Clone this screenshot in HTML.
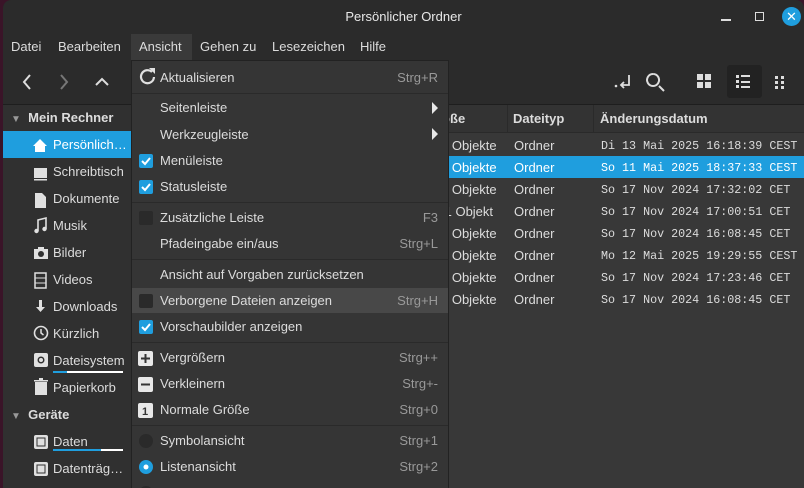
<!DOCTYPE html>
<html><head><meta charset="utf-8"><style>
*{margin:0;padding:0;box-sizing:border-box}
body{width:804px;height:488px;overflow:hidden;background:#3a1428;font-family:"Liberation Sans","DejaVu Sans",sans-serif;font-size:13px;color:#dcdcdc;position:relative}
.win{position:absolute;left:3px;top:0;width:801px;height:488px;background:#2b2b2b;border-radius:8px 8px 0 0;overflow:hidden}
.abs{position:absolute}
.t{position:absolute;white-space:nowrap;line-height:16px}
.col div{white-space:nowrap;height:22px}
</style></head><body>
<div class="win">
 <div class="t" style="left:0;width:801px;text-align:center;top:9px;color:#e8e8e8">Persönlicher Ordner</div>
 <div class="abs" style="left:718px;top:19px;width:10px;height:1.5px;background:#ddd"></div>
 <div class="abs" style="left:752px;top:12px;width:9px;height:9px;border:1.5px solid #ddd"></div>
 <div class="abs" style="left:779px;top:7px;width:19px;height:19px;border-radius:50%;background:#1f9ede;color:#fff;font-weight:bold;text-align:center;line-height:19px;font-size:13px">✕</div>
 <div class="abs" style="left:128px;top:34px;width:61px;height:26px;background:#3a3a3a"></div>
 <div class="t" style="left:8px;top:39px">Datei</div>
 <div class="t" style="left:55px;top:39px">Bearbeiten</div>
 <div class="t" style="left:136px;top:39px">Ansicht</div>
 <div class="t" style="left:197px;top:39px">Gehen zu</div>
 <div class="t" style="left:269px;top:39px">Lesezeichen</div>
 <div class="t" style="left:357px;top:39px">Hilfe</div>
 <svg class="abs" style="left:0;top:60px" width="801" height="45">
  <g fill="none" stroke="#ddd" stroke-width="2">
   <path d="M27 15l-6 7 6 7"/><path d="M58 15l6 7-6 7" stroke="#777"/><path d="M93 25l6-6 6 6"/>
   <path d="M650 14a6 6 0 1 0 .1 0M656 26l5 5"/>
   <path d="M626 15v10h-7M621 22l-3 3 3 3" stroke-width="1.8"/>
  </g>
  <circle cx="613" cy="26" r="1.3" fill="#ddd"/>
  <g fill="#ddd"><rect x="694" y="14" width="6" height="6"/><rect x="702" y="14" width="6" height="6"/><rect x="694" y="22" width="6" height="6"/><rect x="702" y="22" width="6" height="6"/></g>
  <rect x="724" y="5" width="35" height="33" rx="3" fill="#222"/>
  <g fill="#ddd"><rect x="733" y="15" width="3" height="3"/><rect x="738" y="15" width="9" height="2"/><rect x="733" y="20" width="3" height="3"/><rect x="738" y="21" width="9" height="2"/><rect x="733" y="25" width="3" height="3"/><rect x="738" y="26" width="9" height="2"/>
  <rect x="772" y="16" width="3" height="3"/><rect x="778" y="16" width="3" height="3"/><rect x="772" y="21" width="3" height="3"/><rect x="778" y="21" width="3" height="3"/><rect x="772" y="26" width="3" height="3"/><rect x="778" y="26" width="3" height="3"/></g>
 </svg>
 <div class="abs" style="left:0;top:104px;width:801px;height:1px;background:#1e1e1e"></div>
 <div class="abs" style="left:0;top:105px;width:128px;height:383px;background:#303030"></div>
 <div class="abs" style="left:0;top:131px;width:128px;height:27px;background:#1f9ede"></div>
 <div class="t" style="left:8px;top:110px;font-weight:bold;color:#ddd"><span style="color:#999;font-size:10px">▼</span>&nbsp; Mein Rechner</div>
 <div class="t" style="left:50px;top:137px;color:#fff">Persönlich…</div>
 <div class="t" style="left:50px;top:164px">Schreibtisch</div>
 <div class="t" style="left:50px;top:191px">Dokumente</div>
 <div class="t" style="left:50px;top:218px">Musik</div>
 <div class="t" style="left:50px;top:245px">Bilder</div>
 <div class="t" style="left:50px;top:272px">Videos</div>
 <div class="t" style="left:50px;top:299px">Downloads</div>
 <div class="t" style="left:50px;top:326px">Kürzlich</div>
 <div class="t" style="left:50px;top:353px">Dateisystem</div>
 <div class="abs" style="left:50px;top:371px;width:70px;height:2px;background:#fff"></div><div class="abs" style="left:50px;top:371px;width:14px;height:2px;background:#1f9ede"></div>
 <div class="t" style="left:50px;top:380px">Papierkorb</div>
 <div class="t" style="left:8px;top:407px;font-weight:bold"><span style="color:#999;font-size:10px">▼</span>&nbsp; Geräte</div>
 <div class="t" style="left:50px;top:434px">Daten</div>
 <div class="abs" style="left:50px;top:449px;width:70px;height:2px;background:#fff"></div><div class="abs" style="left:50px;top:449px;width:48px;height:2px;background:#1f9ede"></div>
 <div class="t" style="left:50px;top:461px">Datenträg…</div>
 <svg class="abs" style="left:28px;top:134px" width="20" height="350" fill="#e0e0e0">
  <path d="M9 5l-7 7h2v6h10v-6h2z" fill="#fff"/>
  <rect x="3" y="34" width="13" height="10"/><rect x="3" y="45" width="13" height="1.5"/>
  <path d="M4 59h7l4 4v11h-11z"/>
  <path d="M7 97v-11l8-2v11" stroke="#e0e0e0" stroke-width="1.6" fill="none"/><circle cx="5.5" cy="97" r="2.2"/><circle cx="13.5" cy="95" r="2.2"/>
  <path d="M3 115h14v10h-14zM7 113h6v2h-6z"/><circle cx="10" cy="120" r="3" fill="#303030"/>
  <path d="M4 139h11v15h-11z" fill="none" stroke="#e0e0e0" stroke-width="1.5"/><path d="M4 144h11M4 149h11" stroke="#e0e0e0"/>
  <path d="M8 166h3v7h3l-4.5 5-4.5-5h3z"/>
  <circle cx="10" cy="199" r="6.5" fill="none" stroke="#e0e0e0" stroke-width="1.6"/><path d="M10 195v4l2.5 2" stroke="#e0e0e0" stroke-width="1.5" fill="none"/>
  <rect x="3" y="219" width="14" height="14" rx="2"/><circle cx="10" cy="226" r="3.5" fill="#303030"/><circle cx="10" cy="226" r="2"/>
  <path d="M4 248h12v13h-12zM3 246h14v1.5h-14zM8 244h4v2h-4z"/>
  <rect x="3" y="301" width="14" height="14" rx="2"/><rect x="5.5" y="303.5" width="9" height="9" fill="#303030"/><rect x="6.5" y="304.5" width="7" height="7"/>
  <rect x="3" y="328" width="14" height="14" rx="2"/><rect x="5.5" y="330.5" width="9" height="9" fill="#303030"/><rect x="6.5" y="331.5" width="7" height="7"/>
 </svg>
 <div class="abs" style="left:128px;top:105px;width:673px;height:383px;background:#383838"></div>
 <div class="abs" style="left:128px;top:105px;width:673px;height:28px;background:#333;border-bottom:1px solid #2a2a2a"></div>
 <div class="abs" style="left:504px;top:105px;width:1px;height:28px;background:#2a2a2a"></div>
 <div class="abs" style="left:590px;top:105px;width:1px;height:28px;background:#2a2a2a"></div>
 <div class="t" style="left:434px;top:111px;font-weight:bold">röße</div>
 <div class="t" style="left:510px;top:111px;font-weight:bold">Dateityp</div>
 <div class="t" style="left:597px;top:111px;font-weight:bold">Änderungsdatum</div>
 <div class="abs" style="left:128px;top:156px;width:673px;height:22px;background:#1f9ede"></div>
 <div class="col" style="position:absolute;left:438px;top:135px;line-height:22px">
  <div>0 Objekte</div><div style="color:#fff">7 Objekte</div><div>0 Objekte</div><div>&nbsp;1 Objekt</div><div>0 Objekte</div><div>0 Objekte</div><div>3 Objekte</div><div>0 Objekte</div>
 </div>
 <div class="col" style="position:absolute;left:511px;top:135px;line-height:22px">
  <div>Ordner</div><div style="color:#fff">Ordner</div><div>Ordner</div><div>Ordner</div><div>Ordner</div><div>Ordner</div><div>Ordner</div><div>Ordner</div>
 </div>
 <div class="col" style="position:absolute;left:598px;top:135px;line-height:22px;font-family:'Liberation Mono',monospace;font-size:11.7px">
  <div>Di 13 Mai 2025 16:18:39 CEST</div><div style="color:#fff">So 11 Mai 2025 18:37:33 CEST</div><div>So 17 Nov 2024 17:32:02 CET</div><div>So 17 Nov 2024 17:00:51 CET</div><div>So 17 Nov 2024 16:08:45 CET</div><div>Mo 12 Mai 2025 19:29:55 CEST</div><div>So 17 Nov 2024 17:23:46 CET</div><div>So 17 Nov 2024 16:08:45 CET</div>
 </div>
 <div class="abs" style="left:128px;top:60px;width:318px;height:430px;background:#353535;border:1px solid #222"></div>
 <div class="abs" style="left:129px;top:288px;width:316px;height:25px;background:#484848"></div>
 <div class="abs" style="left:129px;top:93px;width:316px;height:1px;background:#2a2a2a"></div>
 <div class="abs" style="left:129px;top:202px;width:316px;height:1px;background:#2a2a2a"></div>
 <div class="abs" style="left:129px;top:259px;width:316px;height:1px;background:#2a2a2a"></div>
 <div class="abs" style="left:129px;top:342px;width:316px;height:1px;background:#2a2a2a"></div>
 <div class="abs" style="left:129px;top:425px;width:316px;height:1px;background:#2a2a2a"></div>
 <div class="t" style="left:157px;top:70px">Aktualisieren</div>
 <div class="t" style="left:157px;top:100px">Seitenleiste</div>
 <div class="t" style="left:157px;top:127px">Werkzeugleiste</div>
 <div class="t" style="left:157px;top:153px">Menüleiste</div>
 <div class="t" style="left:157px;top:179px">Statusleiste</div>
 <div class="t" style="left:157px;top:210px">Zusätzliche Leiste</div>
 <div class="t" style="left:157px;top:236px">Pfadeingabe ein/aus</div>
 <div class="t" style="left:157px;top:267px">Ansicht auf Vorgaben zurücksetzen</div>
 <div class="t" style="left:157px;top:293px">Verborgene Dateien anzeigen</div>
 <div class="t" style="left:157px;top:319px">Vorschaubilder anzeigen</div>
 <div class="t" style="left:157px;top:350px">Vergrößern</div>
 <div class="t" style="left:157px;top:376px">Verkleinern</div>
 <div class="t" style="left:157px;top:402px">Normale Größe</div>
 <div class="t" style="left:157px;top:433px">Symbolansicht</div>
 <div class="t" style="left:157px;top:459px">Listenansicht</div>
 <div style="position:absolute;left:340px;width:95px;text-align:right;color:#999;line-height:16px">
  <div class="t" style="right:0;top:70px">Strg+R</div>
  <div class="t" style="right:0;top:210px">F3</div>
  <div class="t" style="right:0;top:236px">Strg+L</div>
  <div class="t" style="right:0;top:293px">Strg+H</div>
  <div class="t" style="right:0;top:350px">Strg++</div>
  <div class="t" style="right:0;top:376px">Strg+-</div>
  <div class="t" style="right:0;top:402px">Strg+0</div>
  <div class="t" style="right:0;top:433px">Strg+1</div>
  <div class="t" style="right:0;top:459px">Strg+2</div>
 </div>
 <svg class="abs" style="left:128px;top:60px" width="318" height="428">
  <path d="M21 12a6.5 6.5 0 1 0 2 5" fill="none" stroke="#e0e0e0" stroke-width="2.2"/><path d="M18 8h6v6z" fill="#e0e0e0"/>
  <path d="M301 42l6 6-6 6zM301 68l6 6-6 6z" fill="#e8e8e8"/>
  <g fill="#1f9ede"><rect x="8" y="94" width="14" height="14" rx="2"/><rect x="8" y="120" width="14" height="14" rx="2"/><rect x="8" y="260" width="14" height="14" rx="2"/></g>
  <g fill="none" stroke="#fff" stroke-width="2"><path d="M11 101l3 3 5-6M11 127l3 3 5-6M11 267l3 3 5-6"/></g>
  <g fill="#2a2a2a"><rect x="8" y="151" width="14" height="14" rx="2"/><rect x="8" y="234" width="14" height="14" rx="2"/></g>
  <g fill="#e8e8e8"><rect x="7" y="291" width="15" height="15" rx="2"/><rect x="7" y="317" width="15" height="15" rx="2"/><rect x="7" y="343" width="15" height="15" rx="2"/></g>
  <path d="M10 298.5h9M14.5 294v9M10 324.5h9" stroke="#353535" stroke-width="2"/>
  <text x="11" y="355" font-size="11" font-weight="bold" fill="#353535" font-family="Liberation Sans">1</text>
  <circle cx="15" cy="381" r="7" fill="#2a2a2a"/>
  <circle cx="15" cy="407" r="7" fill="#1f9ede"/><circle cx="15" cy="407" r="2.5" fill="#fff"/>
  <circle cx="15" cy="433" r="7" fill="#2a2a2a"/>
 </svg>
</div>
</body></html>
